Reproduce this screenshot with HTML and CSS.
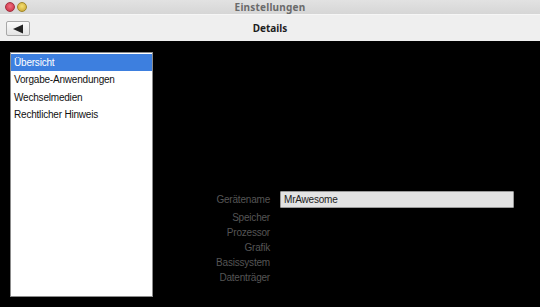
FILE: index.html
```html
<!DOCTYPE html>
<html>
<head>
<meta charset="utf-8">
<link rel="stylesheet" href="styles.css">
</head>
<body>
<div class="window">
  <div class="titlebar">
    <div class="controls">
      <span class="dot close"></span>
      <span class="dot min"></span>
    </div>
    <div class="title">Einstellungen</div>
  </div>
  <div class="toolbar">
    <button class="back"><svg width="12" height="10" viewBox="0 0 12 10"><polygon points="1,5 11,0.5 11,9.5" fill="#222"/></svg></button>
    <div class="heading">Details</div>
  </div>
  <div class="content">
    <ul class="sidebar">
      <li class="selected">Übersicht</li>
      <li>Vorgabe-Anwendungen</li>
      <li>Wechselmedien</li>
      <li>Rechtlicher Hinweis</li>
    </ul>
    <div class="details">
      <div class="row first"><span class="label">Gerätename</span><span class="field">MrAwesome</span></div>
      <div class="row"><span class="label">Speicher</span></div>
      <div class="row"><span class="label">Prozessor</span></div>
      <div class="row"><span class="label">Grafik</span></div>
      <div class="row"><span class="label">Basissystem</span></div>
      <div class="row"><span class="label">Datenträger</span></div>
    </div>
  </div>
</div>
</body>
</html>
```
FILE: styles.css
```css
* { box-sizing: border-box; }
html, body { margin: 0; padding: 0; background: #000; }
body { width: 540px; height: 307px; overflow: hidden; font-family: "Liberation Sans", "DejaVu Sans", sans-serif; }
.window { width: 540px; height: 307px; display: flex; flex-direction: column; }
.titlebar {
  height: 14px; position: relative;
  background: linear-gradient(#e2e2e2, #d6d6d6);
  display: flex; align-items: center; justify-content: center;
}
.controls { position: absolute; left: 5px; top: 2px; display: flex; gap: 2px; }
.dot { width: 10px; height: 10px; border-radius: 50%; display: block; }
.close { background: radial-gradient(circle at 50% 40%, #f07080, #c8283c); border: 1px solid #a03040; }
.min { background: radial-gradient(circle at 50% 40%, #f4e070, #c8a030); border: 1px solid #a08828; }
.title { font-family: "Noto Sans", sans-serif; font-size: 10px; font-weight: bold; color: #6a6a6a; letter-spacing: 0.2px; }
.toolbar {
  height: 27px; background: #efefef; border-top: 1px solid #f6f6f6;
  position: relative; display: flex; align-items: center; justify-content: center;
}
.back {
  position: absolute; left: 6px; top: 6px; width: 24px; height: 15px; padding: 0;
  border: 1px solid #a8a8a8; border-radius: 2px;
  background: linear-gradient(#fafafa, #e4e4e4);
  display: flex; align-items: center; justify-content: center;
}
.heading { font-family: "Noto Sans", sans-serif; font-size: 10px; font-weight: bold; color: #1e1e1e; }
.content { flex: 1; display: flex; padding: 11px 0 0 10px; }
.sidebar {
  list-style: none; margin: 0; padding: 1px 0 0 0; width: 143px; height: 245px;
  background: #fff; border: 1px solid #8c8c8c;
  font-size: 10px; letter-spacing: -0.2px; color: #111;
}
.sidebar li { height: 17.3px; line-height: 17px; padding-left: 3px; }
.sidebar li.selected { background: #3d7fdf; color: #fff; }
.details { flex: 1; display: flex; flex-direction: column; padding-top: 139px; }
.row { display: flex; align-items: center; height: 15px; }
.row.first { height: 17px; margin-bottom: 2px; }
.label { width: 117px; text-align: right; font-size: 10px; letter-spacing: -0.2px; color: #555; }
.field {
  margin-left: 10px; width: 234px; height: 17px; line-height: 15px;
  background: #e3e3e3; border: 1px solid #9a9a9a; border-radius: 1px;
  font-size: 10px; letter-spacing: -0.2px; color: #222; padding-left: 3px;
}
```
